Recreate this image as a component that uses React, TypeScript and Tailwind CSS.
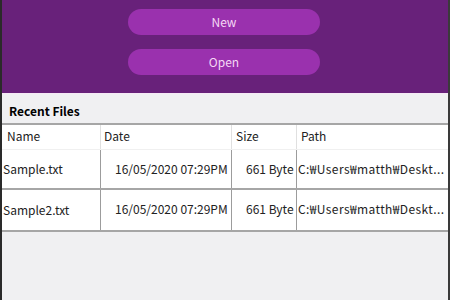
const rows = [
  { name: "Sample.txt", date: "16/05/2020 07:29PM", size: "661 Byte", path: "C:\u20a9Users\u20a9matth\u20a9Deskt..." },
  { name: "Sample2.txt", date: "16/05/2020 07:29PM", size: "661 Byte", path: "C:\u20a9Users\u20a9matth\u20a9Deskt..." },
];

const font = { fontFamily: '"Noto Sans CJK KR", "Noto Sans", sans-serif' };

export default function App() {
  return (
    <div
      style={font}
      className="flex h-[300px] w-[450px] flex-col border-l-2 border-r-2 border-l-[#2a2a2a] border-r-[#3a3a3a] bg-[#f0f0f2] text-[12px] text-black"
    >
      <div className="flex h-[93px] flex-col items-center gap-[14px] bg-[#68217a] pt-[9px] pr-[2px]">
        <button className="h-[26px] w-[192px] rounded-full bg-[#9a31ae] text-[12px] text-[#f5d8f5]">New</button>
        <button className="h-[26px] w-[192px] rounded-full bg-[#9a31ae] text-[12px] text-[#f5d8f5]">Open</button>
      </div>
      <div className="h-px bg-[#f6e9f6]" />
      <div className="px-[7px] pt-[8px] pb-[3px] text-[12px] font-bold leading-[18px]">Recent Files</div>
      <div className="border-t-2 border-b-2 border-[#a6a6a6] bg-white">
        <div className="grid h-[25px] grid-cols-[98px_131px_65px_1fr] border-b border-[#f0f0f0] text-[12px] leading-[22px] text-[#222]">
          <div className="pl-[5px]">Name</div>
          <div className="h-full border-l border-[#e0e0e0] pl-[3px]">Date</div>
          <div className="h-full border-l border-[#e0e0e0] pl-[4px]">Size</div>
          <div className="h-full border-l border-[#e0e0e0] pl-[4px]">Path</div>
        </div>
        {rows.map((r, i) => (
          <div
            key={r.name}
            className={`grid h-[40px] grid-cols-[98px_131px_65px_1fr] items-center whitespace-nowrap text-[12px] text-[#222] ${i === 0 ? "border-b-2 border-[#a6a6a6]" : ""}`}
          >
            <div className="overflow-hidden pl-[1px]">{r.name}</div>
            <div className="h-full overflow-hidden border-l border-[#9c9c9c] pl-[14px] leading-[38px]">{r.date}</div>
            <div className="h-full overflow-hidden border-l border-[#9c9c9c] pl-[14px] leading-[38px]">{r.size}</div>
            <div className="h-full overflow-hidden border-l border-[#9c9c9c] pl-[1px] pr-[2px] tracking-[0.4px] leading-[38px]">{r.path}</div>
          </div>
        ))}
      </div>
      <div className="flex-1" />
    </div>
  );
}
